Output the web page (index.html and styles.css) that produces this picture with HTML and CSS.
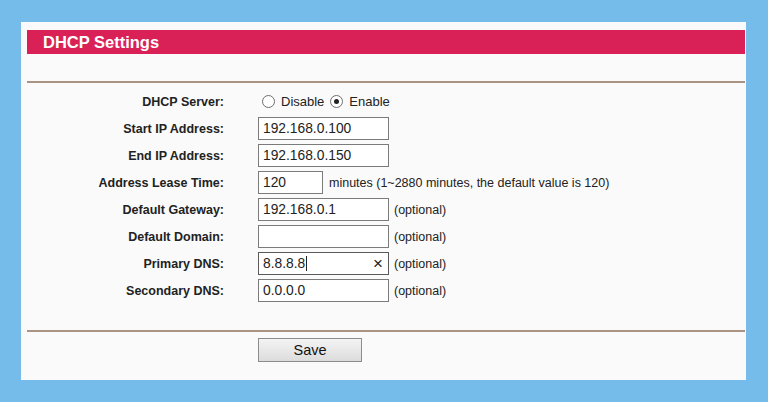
FILE: index.html
```html
<!DOCTYPE html>
<html>
<head>
<meta charset="utf-8">
<link rel="stylesheet" href="styles.css">
</head>
<body>
<div class="panel">
  <div class="title-bar">DHCP Settings</div>
  <div class="rule"></div>
  <div class="form">
    <div class="label">DHCP Server:</div>
    <div class="value radios">
      <span class="radio"></span><span class="rtext">Disable</span>
      <span class="radio checked"></span><span class="rtext">Enable</span>
    </div>

    <div class="label">Start IP Address:</div>
    <div class="value"><div class="field">192.168.0.100</div></div>

    <div class="label">End IP Address:</div>
    <div class="value"><div class="field">192.168.0.150</div></div>

    <div class="label">Address Lease Time:</div>
    <div class="value"><div class="field short">120</div><span class="note note-min">minutes (1~2880 minutes, the default value is 120)</span></div>

    <div class="label">Default Gateway:</div>
    <div class="value"><div class="field">192.168.0.1</div><span class="note">(optional)</span></div>

    <div class="label">Default Domain:</div>
    <div class="value"><div class="field"></div><span class="note">(optional)</span></div>

    <div class="label">Primary DNS:</div>
    <div class="value"><div class="field active">8.8.8.8<span class="caret"></span><span class="clear">×</span></div><span class="note">(optional)</span></div>

    <div class="label">Secondary DNS:</div>
    <div class="value"><div class="field">0.0.0.0</div><span class="note">(optional)</span></div>
  </div>
  <div class="rule rule-bottom"></div>
  <div class="actions">
    <button class="save">Save</button>
  </div>
</div>
</body>
</html>
```
FILE: styles.css
```css
html, body {
  margin: 0;
  padding: 0;
}
body {
  background: #76bcea;
  width: 768px;
  height: 402px;
  overflow: hidden;
  font-family: "Liberation Sans", Arial, sans-serif;
  padding-top: 22px;
  box-sizing: border-box;
}
.panel {
  margin-left: 21px;
  width: 725px;
  height: 358px;
  background: #fafafa;
  box-sizing: border-box;
  padding: 8px 1px 0 6px;
  display: flex;
  flex-direction: column;
}
.title-bar {
  height: 24px;
  background: #d92057;
  color: #fff;
  font-weight: bold;
  font-size: 16.5px;
  line-height: 24px;
  padding-left: 16px;
}
.rule {
  height: 2px;
  background: #a99484;
  margin-top: 27px;
}
.form {
  margin-top: 5px;
  display: grid;
  grid-template-columns: 197px 1fr;
  grid-auto-rows: 27px;
}
.label {
  font-weight: bold;
  font-size: 12.5px;
  color: #222;
  text-align: right;
  display: flex;
  align-items: center;
  justify-content: flex-end;
}
.value {
  display: flex;
  align-items: center;
  padding-left: 34px;
  font-size: 12.5px;
  color: #222;
}
.field {
  position: relative;
  width: 131px;
  height: 23px;
  box-sizing: border-box;
  border: 1px solid #7b7b7b;
  background: #fff;
  font-size: 13.8px;
  line-height: 21px;
  padding-left: 4px;
  color: #222;
  display: flex;
  align-items: center;
}
.field.short {
  width: 65px;
}
.field.active {
  border-color: #5a5a5a;
}
.caret {
  display: inline-block;
  width: 1px;
  height: 15px;
  background: #222;
  margin-left: 1px;
}
.clear {
  position: absolute;
  right: 5px;
  top: 0;
  font-size: 17px;
  line-height: 21px;
  color: #222;
}
.note {
  margin-left: 5px;
}
.note-min {
  margin-left: 6px;
}
.radios {
  padding-left: 38px;
  font-size: 13px;
}
.radio {
  width: 11px;
  height: 11px;
  border: 1px solid #6e6e6e;
  border-radius: 50%;
  background: #fff;
  box-sizing: content-box;
  position: relative;
}
.radio.checked::after {
  content: "";
  position: absolute;
  left: 3px;
  top: 3px;
  width: 5px;
  height: 5px;
  border-radius: 50%;
  background: #222;
}
.rtext {
  margin-left: 6px;
  margin-right: 6px;
}
.rule-bottom {
  margin-top: 26px;
}
.actions {
  padding-left: 231px;
  margin-top: 6px;
}
.save {
  width: 104px;
  height: 24px;
  border: 1px solid #8c8c8c;
  background: linear-gradient(#f4f4f4, #dcdcdc);
  font-family: "Liberation Sans", Arial, sans-serif;
  font-size: 14.5px;
  color: #111;
  padding: 0;
}
```
